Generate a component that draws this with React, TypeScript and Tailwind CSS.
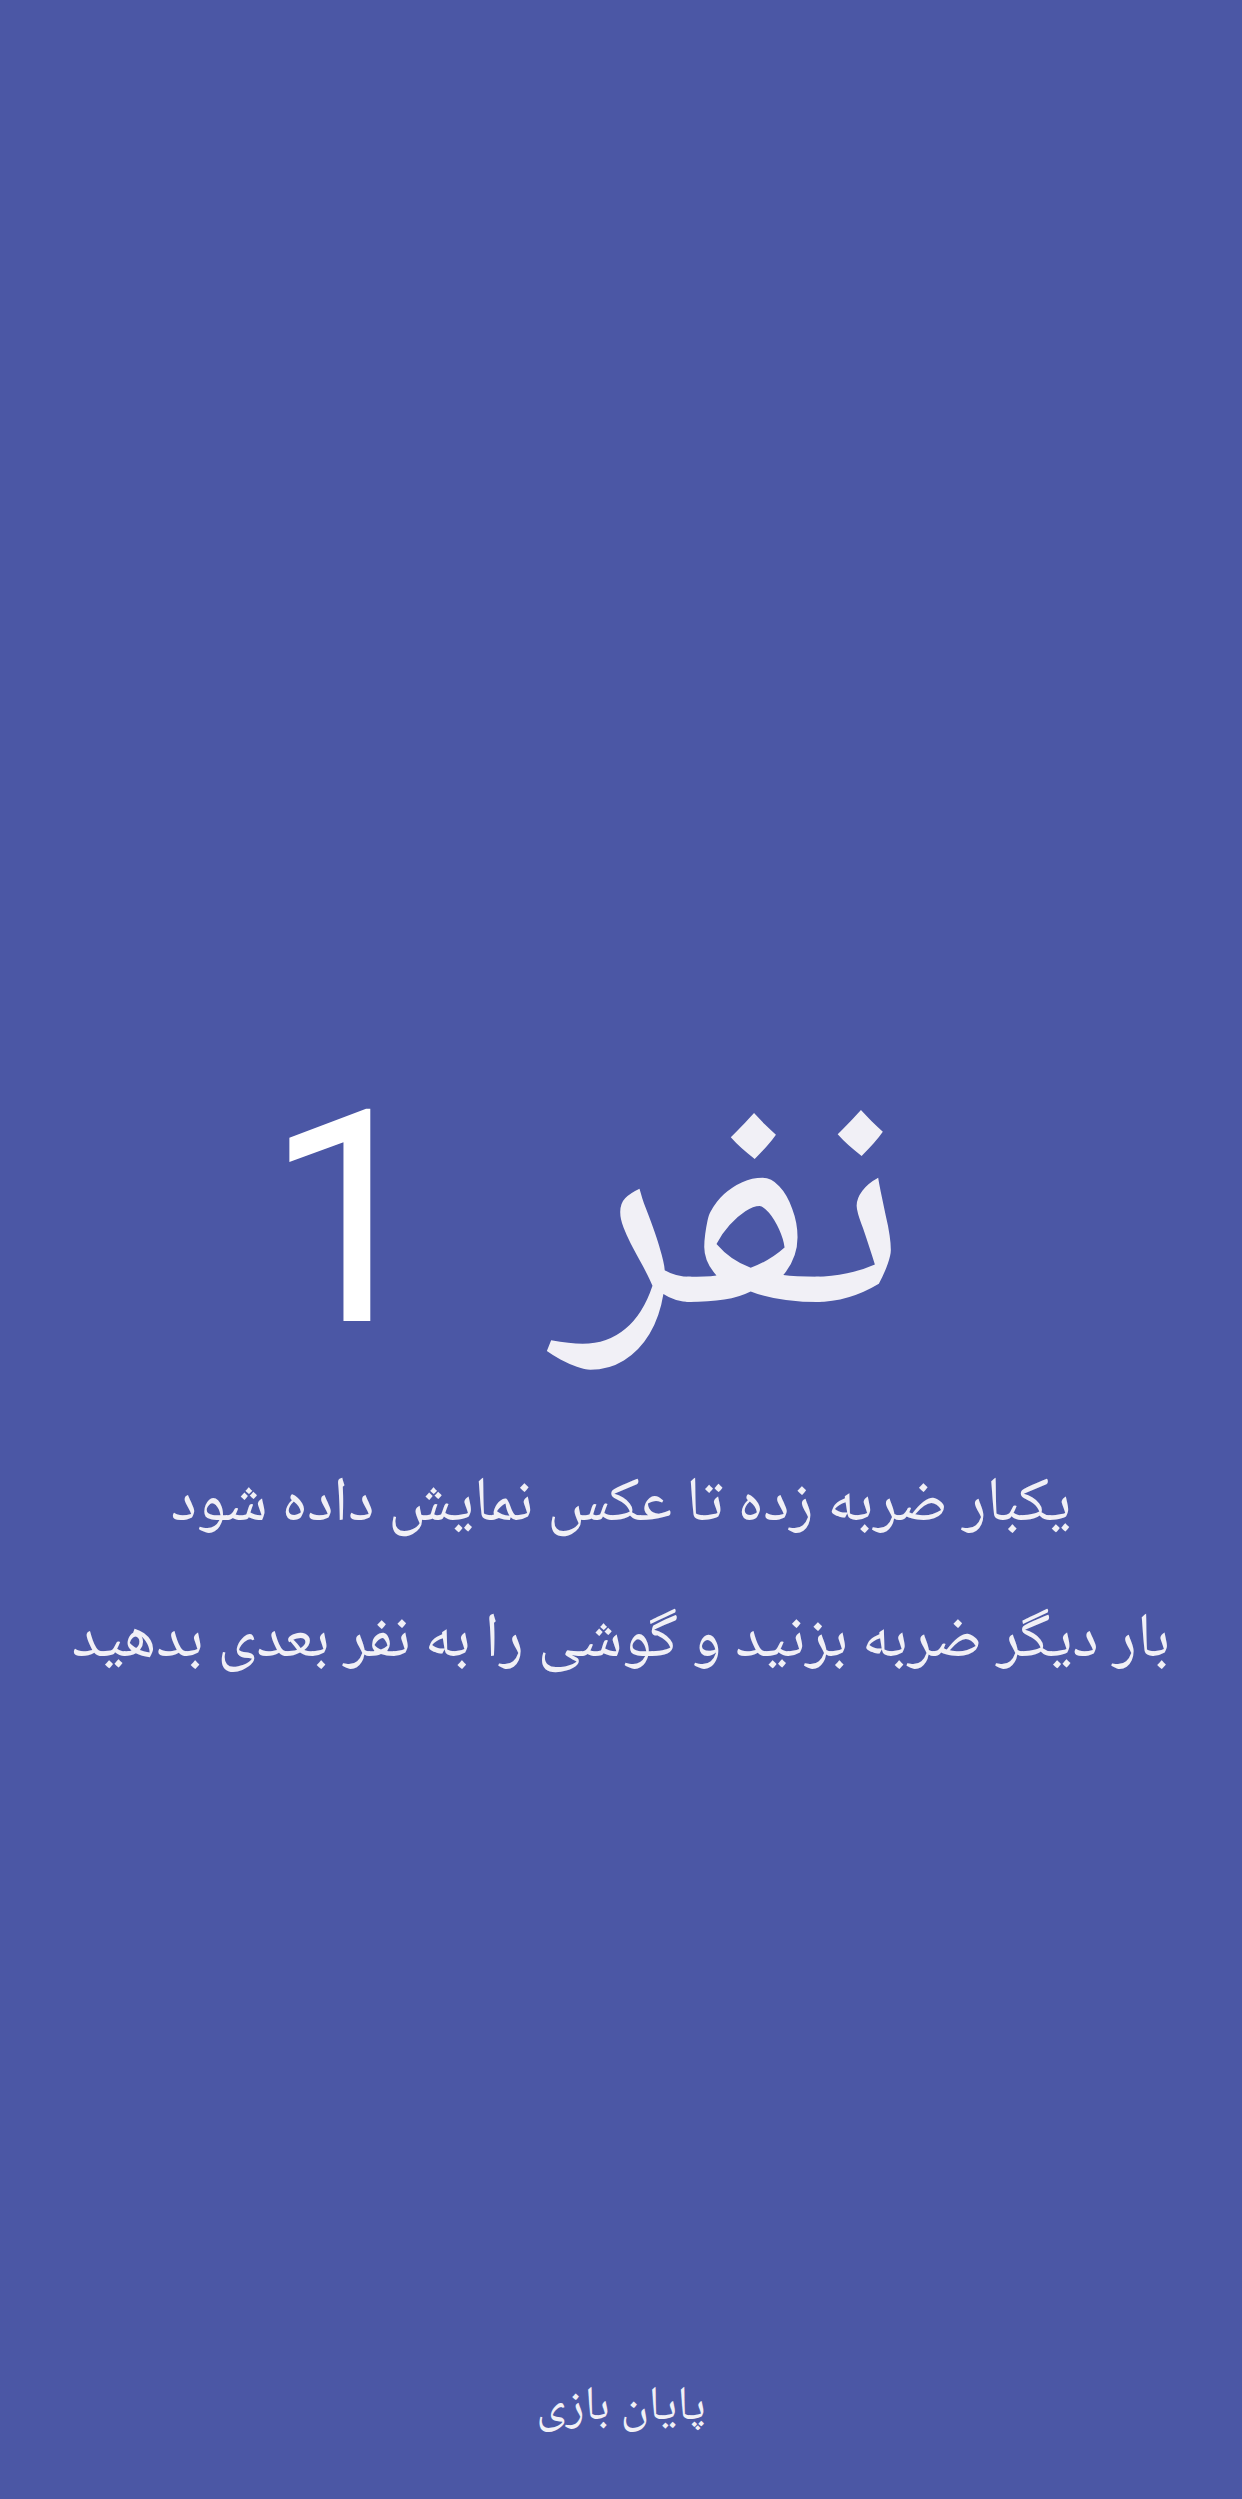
export default function App() {
  return (
    <div
      dir="rtl"
      className="w-[1242px] h-[2499px] bg-[#4b57a5] flex flex-col items-center text-[#f1f0f6] font-['Noto_Naskh_Arabic','Noto_Sans_Arabic','DejaVu_Sans',sans-serif]"
    >
      {/* title */}
      <div className="mt-[1042px] pr-[70px] flex items-center justify-center leading-none">
        <span className="mt-[22px] text-[332px] leading-none">نفر</span>
        <span className="text-[297px] font-[Roboto,sans-serif] text-white leading-none mr-[122px]">1</span>
      </div>

      {/* instructions */}
      <p className="mt-[79px] text-[63px] leading-none text-center">
        یکبار ضربه زده تا عکس نمایش داده شود
      </p>
      <p className="mt-[73px] text-[63px] leading-none text-center">
        بار دیگر ضربه بزنید و گوشی را به نفر بعدی بدهید
      </p>

      <div className="flex-1" />

      {/* footer */}
      <button className="mb-[66px] text-[48px] leading-none">پایان بازی</button>
    </div>
  );
}
